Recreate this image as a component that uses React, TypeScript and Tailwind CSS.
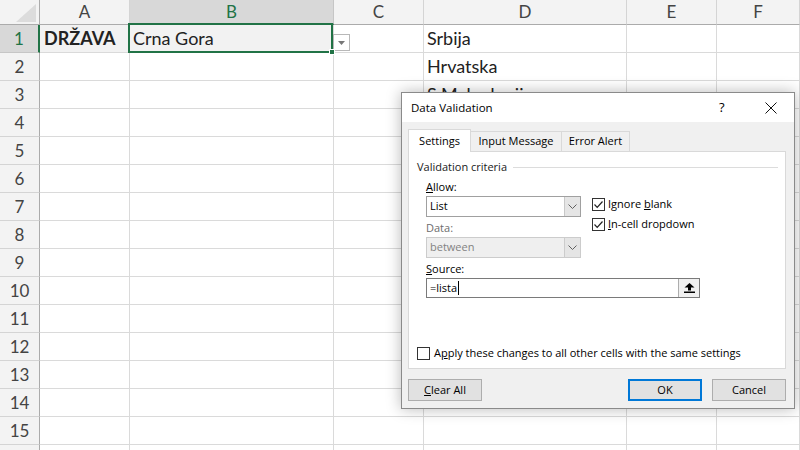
import { JSX } from "react";

const cols = ["A", "B", "C", "D", "E", "F"];
const rows = Array.from({ length: 16 }, (_, i) => i + 1);

const cellText: Record<string, string> = {
  A1: "DRŽAVA",
  B1: "Crna Gora",
  D1: "Srbija",
  D2: "Hrvatska",
  D3: "S.Makedonija",
};

function Chevron(): JSX.Element {
  return (
    <svg width="9" height="6" viewBox="0 0 9 6">
      <polyline points="0.5,0.5 4.5,4.5 8.5,0.5" fill="none" stroke="#606060" strokeWidth="1" />
    </svg>
  );
}

function Check({ checked }: { checked: boolean }): JSX.Element {
  return (
    <div className="w-[13px] h-[13px] border border-[#333] bg-white flex items-center justify-center">
      {checked && (
        <svg width="11" height="11" viewBox="0 0 11 11">
          <polyline points="1.5,5.5 4.2,8.3 9.5,2.5" fill="none" stroke="#222" strokeWidth="1.2" />
        </svg>
      )}
    </div>
  );
}

function Sheet(): JSX.Element {
  return (
    <div
      className="grid grid-cols-[40px_90px_204px_90px_203px_90px_1fr] grid-rows-[25px_repeat(16,28px)] text-[#222]"
      style={{ fontFamily: "Lato, 'Open Sans', sans-serif" }}
    >
      <div className="bg-[#f3f3f3] border-r border-b border-[#ababab] relative">
        <svg className="absolute left-[16px] top-[4px]" width="20" height="18" viewBox="0 0 20 18">
          <polygon points="20,0 20,18 0,18" fill="#dcdcdc" />
        </svg>
      </div>
      {cols.map((c) => (
        <div
          key={c}
          className={
            c === "B"
              ? "bg-[#d8d8d8] border-r border-b-2 border-r-[#c6c6c6] border-b-[#217346] text-[#217346] flex items-center justify-center text-[17px]"
              : "bg-[#f3f3f3] border-r border-b border-r-[#d4d4d4] border-b-[#ababab] text-[#444] flex items-center justify-center text-[17px]"
          }
        >
          {c}
        </div>
      ))}
      {rows.map((r) => (
        <RowCells key={r} r={r} />
      ))}
    </div>
  );
}

function RowCells({ r }: { r: number }): JSX.Element {
  return (
    <>
      <div
        className={
          r === 1
            ? "bg-[#d8d8d8] border-r-2 border-b border-r-[#217346] border-b-[#c6c6c6] text-[#217346] flex items-center justify-center text-[17px]"
            : "bg-[#f3f3f3] border-r border-b border-r-[#ababab] border-b-[#d4d4d4] text-[#444] flex items-center justify-center text-[17px]"
        }
      >
        {r < 16 ? r : ""}
      </div>
      {cols.map((c) => {
        const key = `${c}${r}`;
        const filled = key === "A1" || key === "B1";
        return (
          <div
            key={key}
            className={`relative border-r border-b border-[#dadada] flex items-center pl-[3px] text-[18px] whitespace-nowrap ${
              filled ? "bg-[#f2f2f2]" : "bg-white"
            } ${key === "A1" ? "font-bold pl-[4px]" : ""}`}
          >
            {cellText[key]}
            {key === "B1" && (
              <>
                <div className="absolute left-[-2px] top-[-2px] right-0 bottom-[-1px] border-2 border-[#217346]" />
                <div className="absolute right-[-2px] bottom-[-3px] w-[6px] h-[6px] bg-[#217346] border border-white z-10" />
              </>
            )}
            {key === "C1" && (
              <div className="absolute left-[-1px] top-[9px] w-[17px] h-[17px] border border-[#b8b8b8] bg-white flex items-center justify-center">
                <svg width="7" height="4" viewBox="0 0 7 4">
                  <polygon points="0,0 7,0 3.5,4" fill="#777" />
                </svg>
              </div>
            )}
          </div>
        );
      })}
    </>
  );
}

function Dialog(): JSX.Element {
  return (
    <div
      className="absolute left-[401px] top-[92px] w-[394px] h-[317px] border border-[#8a8a8a] bg-[#f0f0f0] shadow-[0_0_14px_rgba(0,0,0,0.28)] flex flex-col text-[11px] text-black"
      style={{ fontFamily: "'Open Sans', 'Noto Sans', sans-serif" }}
    >
      <div className="h-[29px] bg-white flex items-center pl-[9px] shrink-0">
        <span className="flex-1 text-[11.5px]">Data Validation</span>
        <span className="w-[10px] text-[13px] mr-[36px]">?</span>
        <svg className="mr-[17px]" width="12" height="12" viewBox="0 0 12 12">
          <path d="M0.5 0.5 L11.5 11.5 M11.5 0.5 L0.5 11.5" stroke="#111" strokeWidth="1" />
        </svg>
      </div>
      <div className="flex-1 flex flex-col pt-[7px] pl-[6px] pr-[8px]">
        <div className="h-[22px] flex items-end">
          <div className="relative z-10 mb-[-1px] h-[23px] w-[63px] bg-white border border-b-0 border-[#d9d9d9] flex items-center justify-center">
            Settings
          </div>
          <div className="h-[20px] w-[91px] border-t border-r border-[#d9d9d9] flex items-center justify-center">
            Input Message
          </div>
          <div className="h-[20px] w-[68px] border-t border-r border-[#d9d9d9] flex items-center justify-center">
            Error Alert
          </div>
        </div>
        <div className="h-[218px] bg-white border border-[#d9d9d9] flex flex-col pl-[8px] pr-[7px] pt-[7px] pb-[7px]">
          <div className="h-[16px] flex items-center gap-[6px]">
            <span className="text-[#1a1a1a]">Validation criteria</span>
            <div className="flex-1 h-px bg-[#dcdcdc]" />
          </div>
          <div className="pl-[9px] flex gap-[11px] mt-[4px]">
            <div className="w-[155px] flex flex-col">
              <div className="h-[16px] leading-[16px]">
                <span className="underline">A</span>llow:
              </div>
              <div className="mt-[1px] h-[21px] border border-[#a0a0a0] bg-white flex">
                <div className="flex-1 pl-[3px] flex items-center">List</div>
                <div className="w-[16px] bg-[#e5e5e5] border-l border-[#c8c8c8] flex items-center justify-center">
                  <Chevron />
                </div>
              </div>
              <div className="mt-[3px] h-[16px] leading-[16px] text-[#6d6d6d]">Data:</div>
              <div className="mt-[1px] h-[21px] border border-[#cccccc] bg-[#efefef] flex text-[#838383]">
                <div className="flex-1 pl-[3px] flex items-center">between</div>
                <div className="w-[16px] bg-[#e5e5e5] border-l border-[#cccccc] flex items-center justify-center">
                  <Chevron />
                </div>
              </div>
            </div>
            <div className="pt-[17px] flex flex-col gap-[4px]">
              <div className="h-[16px] flex items-center gap-[3px]">
                <Check checked />
                <span>
                  Ignore <span className="underline">b</span>lank
                </span>
              </div>
              <div className="h-[16px] flex items-center gap-[3px]">
                <Check checked />
                <span>
                  <span className="underline">I</span>n-cell dropdown
                </span>
              </div>
            </div>
          </div>
          <div className="pl-[9px] mt-[3px] h-[16px] leading-[16px]">
            <span className="underline">S</span>ource:
          </div>
          <div className="ml-[9px] mt-[1px] w-[274px] h-[20px] border border-[#7a7a7a] bg-white flex">
            <div className="flex-1 pl-[3px] flex items-center">
              =lista
              <span className="inline-block w-px h-[14px] bg-black ml-px" />
            </div>
            <div className="w-[21px] border-l border-[#adadad] bg-[#f0f0f0] flex items-center justify-center">
              <svg width="11" height="10" viewBox="0 0 11 10">
                <polygon points="5.5,0 10.5,4.5 0.5,4.5" fill="#000" />
                <rect x="4" y="4" width="3" height="3.5" fill="#000" />
                <rect x="0" y="8.5" width="11" height="1.5" fill="#000" />
              </svg>
            </div>
          </div>
          <div className="mt-auto h-[16px] flex items-center gap-[4px]">
            <Check checked={false} />
            <span>
              A<span className="underline">p</span>ply these changes to all other cells with the same settings
            </span>
          </div>
        </div>
        <div className="mt-[10px] flex">
          <button className="w-[74px] h-[22px] border border-[#adadad] bg-[#e1e1e1]">
            <span className="underline">C</span>lear All
          </button>
          <div className="flex-1" />
          <button className="w-[74px] h-[22px] border-2 border-[#0078d7] bg-[#e1e1e1]">OK</button>
          <button className="ml-[10px] w-[74px] h-[22px] border border-[#adadad] bg-[#e1e1e1]">Cancel</button>
        </div>
      </div>
    </div>
  );
}

export default function App(): JSX.Element {
  return (
    <div className="relative w-[800px] h-[450px] overflow-hidden bg-white">
      <Sheet />
      <Dialog />
    </div>
  );
}
